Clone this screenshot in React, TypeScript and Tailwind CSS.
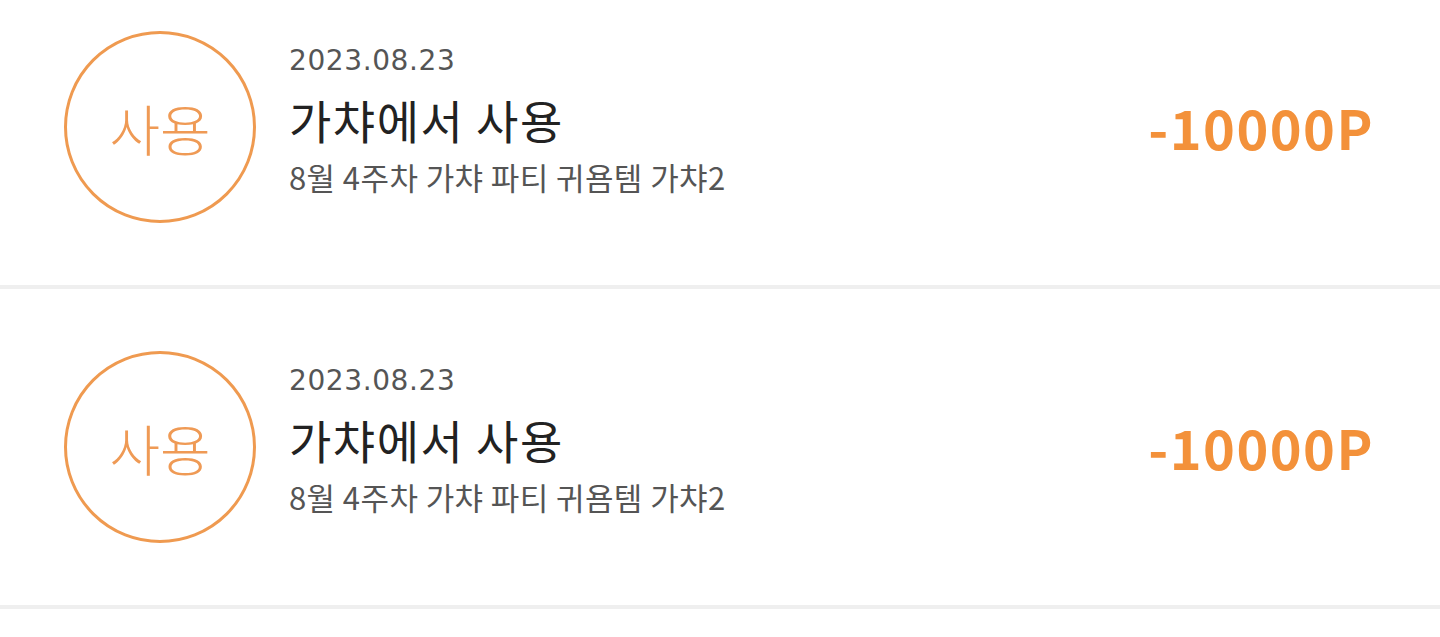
import React from 'react';

interface PointHistoryItem {
  date: string;
  title: string;
  description: string;
  amount: number;
}

const history: PointHistoryItem[] = [
  { date: '2023.08.23', title: '가챠에서 사용', description: '8월 4주차 가챠 파티 귀욤템 가챠2', amount: -10000 },
  { date: '2023.08.23', title: '가챠에서 사용', description: '8월 4주차 가챠 파티 귀욤템 가챠2', amount: -10000 },
];

const font = { fontFamily: '"Noto Sans CJK KR", "Noto Sans", sans-serif' };

/**
 * A single row of the point usage list
 */
const HistoryRow: React.FC<{ item: PointHistoryItem }> = ({ item }) => (
  <div className="h-[320px] flex items-center pl-[64px] pr-[66px] border-b-4 border-[#efefef]">
    {/* Type badge */}
    <div className="w-[192px] h-[192px] shrink-0 rounded-full border-[3px] border-[#ef9a50] flex items-center justify-center">
      <span className="text-[55px] font-light text-[#ef9a55] leading-none">사용</span>
    </div>

    {/* Details */}
    <div className="flex-1 ml-[33px] flex flex-col pb-[18px]">
      <span className="text-[28px] text-[#555] leading-none tracking-[0.6px] mt-[2px] font-['DejaVu_Sans',sans-serif]">
        {item.date}
      </span>
      <span className="text-[46px] text-[#222] leading-none tracking-[1.5px] mt-[21px]">{item.title}</span>
      <span className="text-[31px] text-[#555] leading-none tracking-[0.4px] mt-[19px]">{item.description}</span>
    </div>

    {/* Amount */}
    <span className="text-[54px] font-bold text-[#f3913a] leading-none tracking-[1.5px]">
      {item.amount > 0 ? '+' : '-'}
      {Math.abs(item.amount)}P
    </span>
  </div>
);

export default function App() {
  return (
    <div className="w-[1440px] h-[637px] overflow-hidden bg-white" style={font}>
      <div className="-mt-[31px]">
        {history.map((item, i) => (
          <HistoryRow key={i} item={item} />
        ))}
      </div>
    </div>
  );
}
